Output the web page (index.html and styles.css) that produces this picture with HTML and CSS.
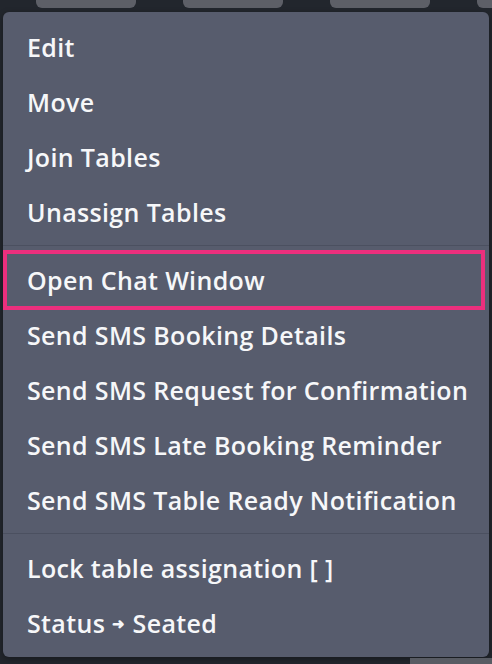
FILE: index.html
```html
<!DOCTYPE html>
<html lang="en">
<head>
  <meta charset="UTF-8" />
  <meta name="viewport" content="width=device-width, initial-scale=1.0" />
  <title>Booking actions</title>
  <link rel="stylesheet" href="styles.css">
</head>
<body>
  <div class="tabs">
    <div class="tab"></div>
    <div class="tab"></div>
    <div class="tab"></div>
    <div class="tab"></div>
  </div>

  <ul class="ctx-menu">
    <li class="ctx-item">Edit</li>
    <li class="ctx-item">Move</li>
    <li class="ctx-item">Join Tables</li>
    <li class="ctx-item">Unassign Tables</li>
    <li class="ctx-sep"></li>
    <li class="ctx-item is-marked">Open Chat Window</li>
    <li class="ctx-item">Send SMS Booking Details</li>
    <li class="ctx-item">Send SMS Request for Confirmation</li>
    <li class="ctx-item">Send SMS Late Booking Reminder</li>
    <li class="ctx-item">Send SMS Table Ready Notification</li>
    <li class="ctx-sep"></li>
    <li class="ctx-item">Lock table assignation [ ]</li>
    <li class="ctx-item">Status <span class="arrow">&#10140;</span> Seated</li>
  </ul>

  <div class="bottom-strip">
    <div class="bottom-block"></div>
  </div>
</body>
</html>
```

FILE: styles.css
```css
:root {
  --page-bg: #22262d;
  --tab-bg: #5d5f67;
  --menu-bg: #575c6d;
  --menu-line: #4b5060;
  --menu-text: #f6f7f9;
  --marker: #ec2f7d;
}

* {
  margin: 0;
  padding: 0;
  box-sizing: border-box;
}

body {
  width: 492px;
  height: 664px;
  overflow: hidden;
  background: var(--page-bg);
  font-family: 'Open Sans', 'Lato', sans-serif;
  display: flex;
  flex-direction: column;
}

.tabs {
  display: flex;
  gap: 47px;
  padding-left: 36px;
  height: 8px;
  flex-shrink: 0;
  overflow: hidden;
}

.tab {
  flex: 0 0 100px;
  height: 8px;
  background: var(--tab-bg);
  border-radius: 0 0 6px 6px;
}

.tab:last-child {
  flex: 1 1 auto;
  border-radius: 0 0 0 6px;
}

.ctx-menu {
  list-style: none;
  margin: 4px 3px 0 3px;
  padding: 7px 0;
  background: var(--menu-bg);
  border-radius: 6px;
  box-shadow: 0 2px 6px rgba(0, 0, 0, 0.35);
  flex-shrink: 0;
}

.ctx-item {
  position: relative;
  height: 55px;
  display: flex;
  align-items: center;
  padding-left: 24px;
  color: var(--menu-text);
  font-size: 25px;
  font-weight: 600;
  letter-spacing: 0.35px;
  white-space: nowrap;
  font-variant-ligatures: none;
}

.ctx-item .arrow {
  font-size: 15px;
  font-weight: 700;
  margin: 0 7px;
}

.ctx-sep {
  height: 1px;
  margin: 6px 0;
  background: var(--menu-line);
}

/* highlight drawn over the row */
.is-marked::after {
  content: '';
  position: absolute;
  left: 0;
  right: 4px;
  top: -2px;
  bottom: -3px;
  border: 4px solid var(--marker);
}

.bottom-strip {
  flex: 1;
  display: flex;
  justify-content: flex-end;
  padding-top: 1px;
}

.bottom-block {
  width: 82px;
  background: #585b63;
}
```
